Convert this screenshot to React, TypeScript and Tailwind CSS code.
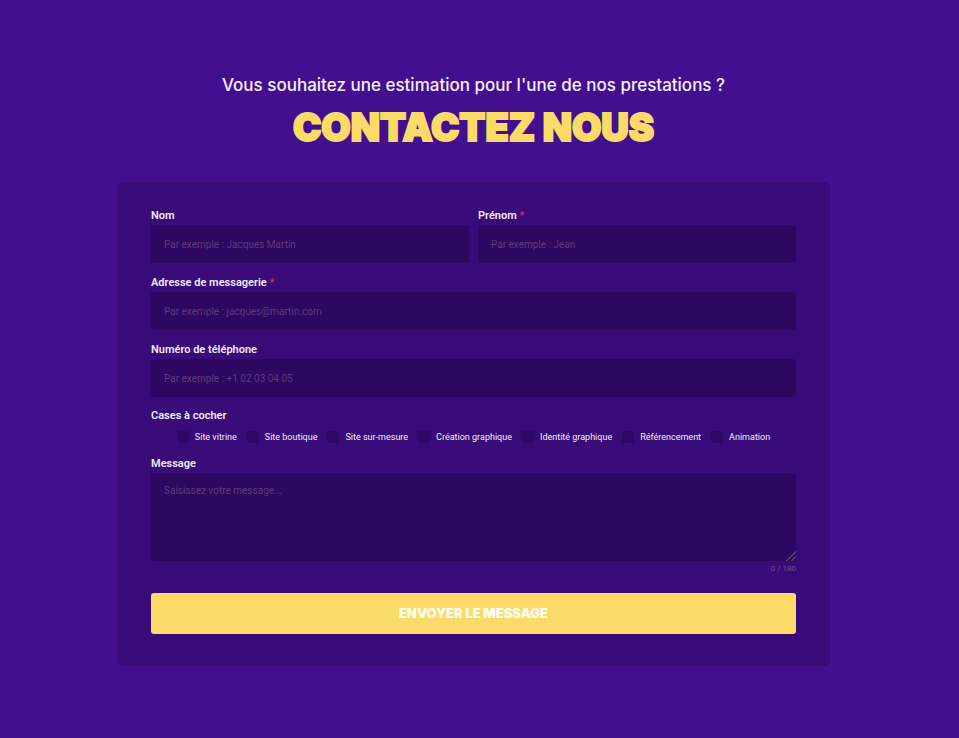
import { useState } from "react";
import type { ReactNode } from "react";

const services = [
  "Site vitrine",
  "Site boutique",
  "Site sur-mesure",
  "Création graphique",
  "Identité graphique",
  "Référencement",
  "Animation",
];

const labelClass = "block h-[18px] text-[11px] leading-[18px] font-semibold text-[#f3eafa]";
const fieldClass =
  "block w-full rounded-[3px] bg-[#2d0760] px-[13px] text-[10px] text-[#f3eafa] outline-none placeholder:text-[#60397f]";

function Label({ id, required, children }: { id: string; required?: boolean; children: ReactNode }) {
  return (
    <label htmlFor={id} className={labelClass}>
      {children}
      {required && <span className="text-[#c72f66]"> *</span>}
    </label>
  );
}

function Field(props: { id: string; label: string; placeholder: string; type?: string; required?: boolean }) {
  return (
    <div className="min-w-0 flex-1">
      <Label id={props.id} required={props.required}>
        {props.label}
      </Label>
      <input
        id={props.id}
        type={props.type ?? "text"}
        required={props.required}
        placeholder={props.placeholder}
        className={`${fieldClass} h-[38px]`}
      />
    </div>
  );
}

export default function App() {
  const [message, setMessage] = useState("");

  return (
    <main className="flex min-h-screen flex-col items-center bg-[#430f90] pt-[73px] pr-3 pb-[72px] font-['Roboto',sans-serif]">
      <p className="text-center font-['Inter',sans-serif] text-[17px] leading-6 font-medium text-[#f8effc]">
        Vous souhaitez une estimation pour l'une de nos prestations ?
      </p>
      <h1 className="mt-[7px] text-center font-['Inter',sans-serif] text-[38px] leading-[46px] font-black text-[#fadb67] [-webkit-text-stroke:2px_#fadb67]">
        CONTACTEZ NOUS
      </h1>
      <form
        onSubmit={(e) => e.preventDefault()}
        className="mt-8 w-full max-w-[713px] rounded-[5px] bg-[#390b78] px-[34px] pt-[25px] pb-8"
      >
        <div className="flex flex-col gap-[11px]">
          <div className="flex gap-[9px]">
            <Field id="nom" label="Nom" placeholder="Par exemple : Jacques Martin" />
            <Field id="prenom" label="Prénom" placeholder="Par exemple : Jean" required />
          </div>
          <Field
            id="email"
            label="Adresse de messagerie"
            placeholder="Par exemple : jacques@martin.com"
            type="email"
            required
          />
          <Field id="tel" label="Numéro de téléphone" placeholder="Par exemple : +1 02 03 04 05" type="tel" />
        </div>
        <fieldset className="mt-[10px]">
          <legend className={labelClass}>Cases à cocher</legend>
          <div className="mt-1 flex flex-wrap justify-center gap-x-[10px] gap-y-2">
            {services.map((service) => (
              <label key={service} className="flex items-center gap-[6px] text-[9px] leading-4 text-[#f3eafa]">
                <input
                  type="checkbox"
                  name="services"
                  value={service}
                  className="size-3 appearance-none rounded-[3px] bg-[#2f0867] checked:bg-[#fadb67]"
                />
                {service}
              </label>
            ))}
          </div>
        </fieldset>
        <div className="mt-[10px]">
          <Label id="message">Message</Label>
          <textarea
            id="message"
            maxLength={180}
            value={message}
            onChange={(e) => setMessage(e.target.value)}
            placeholder="Saisissez votre message..."
            className={`${fieldClass} h-[88px] resize-y py-[10px] leading-4 [&::-webkit-resizer]:bg-[linear-gradient(135deg,transparent_66%,#55406a_66%,#55406a_71%,transparent_71%,transparent_82%,#55406a_82%,#55406a_87%,transparent_87%)]`}
          />
          <p className="text-right text-[8px] leading-4 text-[#70518c]">{message.length} / 180</p>
        </div>
        <button
          type="submit"
          className="mt-4 h-[41px] w-full rounded-[3px] bg-[#fadb67] font-['Inter',sans-serif] text-[13px] font-black text-[#fffdf0]"
        >
          ENVOYER LE MESSAGE
        </button>
      </form>
    </main>
  );
}
